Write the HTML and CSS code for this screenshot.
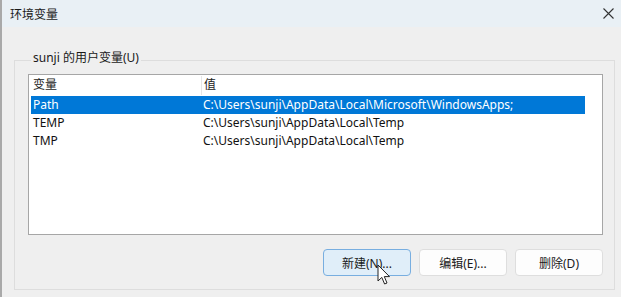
FILE: index.html
```html
<!DOCTYPE html>
<html lang="zh-CN">
<head>
  <meta charset="UTF-8" />
  <title>环境变量</title>
  <link rel="stylesheet" href="styles.css">
</head>
<body>
  <div class="window">
    <div class="titlebar">
      <span class="title">环境变量</span>
      <svg class="close" width="11" height="11" viewBox="0 0 11 11">
        <path d="M0.5 0.5 L10.5 10.5 M10.5 0.5 L0.5 10.5" stroke="#333" stroke-width="1.1" fill="none"/>
      </svg>
    </div>

    <div class="content">
      <fieldset class="group">
        <legend>sunji 的用户变量(U)</legend>

        <div class="listbox">
          <div class="row head">
            <div class="cell">变量</div>
            <div class="cell">值</div>
          </div>
          <div class="row selected">
            <div class="cell">Path</div>
            <div class="cell">C:\Users\sunji\AppData\Local\Microsoft\WindowsApps;</div>
          </div>
          <div class="row">
            <div class="cell">TEMP</div>
            <div class="cell">C:\Users\sunji\AppData\Local\Temp</div>
          </div>
          <div class="row">
            <div class="cell">TMP</div>
            <div class="cell">C:\Users\sunji\AppData\Local\Temp</div>
          </div>
        </div>

        <div class="buttons">
          <button class="btn hover">新建(N)...</button>
          <button class="btn">编辑(E)...</button>
          <button class="btn">删除(D)</button>
        </div>
      </fieldset>
    </div>

    <!-- mouse pointer over the first button -->
    <svg class="cursor" width="14" height="22" viewBox="0 0 14 22">
      <path d="M1 1 L1 17 L4.8 13.4 L7.6 20 L10 19 L7.3 12.6 L12.5 12.6 Z" fill="#fff" stroke="#222" stroke-width="1" stroke-linejoin="round"/>
    </svg>
  </div>
</body>
</html>
```

FILE: styles.css
```css
* {
  box-sizing: border-box;
}

body {
  margin: 0;
  font-family: "Noto Sans", "Noto Sans CJK SC", sans-serif;
  font-size: 12px;
  color: #111;
  background: #f0f0f0;
}

.window {
  position: relative;
  width: 621px;
  height: 297px;
  background: #efefef;
  border-left: 2px solid #a9a9a9;
  overflow: hidden;
}

.titlebar {
  height: 27px;
  display: flex;
  align-items: center;
  justify-content: space-between;
  padding: 0 7px 0 8px;
  background: #e9f0f5;
}

.title {
  font-family: "Noto Sans CJK SC", sans-serif;
  font-size: 12px;
  color: #1a1a1a;
}

.close {
  margin-top: -1px;
}

.content {
  padding: 23px 6px 0 12px;
}

.group {
  margin: 0;
  height: 240px;
  border: 1px solid #dddddd;
  padding: 3px 11px 0 13px;
}

.group legend {
  padding: 0 2px 5px;
  margin-left: 3px;
  line-height: 16px;
  color: #1a1a1a;
}

.listbox {
  height: 161px;
  border: 1px solid #a6a6a6;
  background: #fff;
  padding: 1px 17px 0 2px;
}

.row {
  display: grid;
  grid-template-columns: 170px 1fr;
  height: 18px;
  line-height: 18px;
  white-space: nowrap;
}

.row .cell {
  padding-left: 2px;
}

.head {
  height: 19px;
  margin-bottom: 1px;
  color: #222;
}

.head .cell + .cell {
  border-left: 1px solid #e6e6e6;
  padding-left: 2px;
}

.selected {
  background: #0078d7;
  color: #fff;
}

.buttons {
  display: flex;
  justify-content: flex-end;
  gap: 8px;
  margin-top: 14px;
}

.btn {
  width: 88px;
  height: 27px;
  font-family: "Noto Sans", "Noto Sans CJK SC", sans-serif;
  font-size: 12px;
  color: #1a1a1a;
  background: #fdfdfd;
  border: 1px solid #dedede;
  border-radius: 4px;
}

.btn.hover {
  background: #e0eef9;
  border-color: #78aee0;
}

.cursor {
  position: absolute;
  left: 375px;
  top: 264px;
}
```
